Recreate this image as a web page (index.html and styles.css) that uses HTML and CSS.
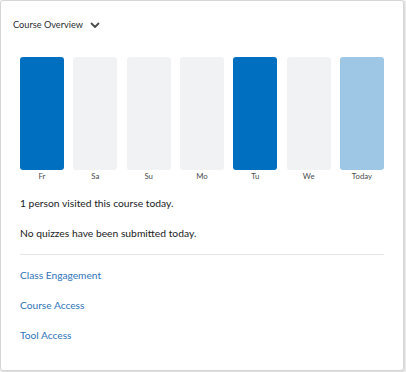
FILE: index.html
```html
<!DOCTYPE html>
<html lang="en">
<head>
  <meta charset="UTF-8">
  <title>Course Overview</title>
  <link rel="stylesheet" href="styles.css">
</head>
<body>
  <div class="card">
    <!-- Header -->
    <div class="card-header">
      <h2>Course Overview</h2>
      <svg class="chevron" width="10" height="7" viewBox="0 0 10 7">
        <path d="M1.5 1.5 L5 5 L8.5 1.5" fill="none" stroke="#494c4e" stroke-width="1.8" stroke-linecap="round" stroke-linejoin="round"/>
      </svg>
    </div>

    <!-- Weekly visits -->
    <div class="chart">
      <div class="day"><div class="bar bar-visit"></div><span>Fr</span></div>
      <div class="day"><div class="bar"></div><span>Sa</span></div>
      <div class="day"><div class="bar"></div><span>Su</span></div>
      <div class="day"><div class="bar"></div><span>Mo</span></div>
      <div class="day"><div class="bar bar-visit"></div><span>Tu</span></div>
      <div class="day"><div class="bar"></div><span>We</span></div>
      <div class="day"><div class="bar bar-today"></div><span>Today</span></div>
    </div>

    <div class="summary">
      <p>1 person visited this course today.</p>
      <p>No quizzes have been submitted today.</p>
    </div>

    <div class="links">
      <a href="#">Class Engagement</a>
      <a href="#">Course Access</a>
      <a href="#">Tool Access</a>
    </div>
  </div>
</body>
</html>
```

FILE: styles.css
```css
* {
  margin: 0;
  padding: 0;
  box-sizing: border-box;
}

body {
  font-family: Lato, 'Open Sans', sans-serif;
  background: #f3f3f3;
  width: 406px;
  height: 372px;
}

.card {
  width: 404px;
  height: 371px;
  background: white;
  border: 1px solid #d6d6d6;
  border-radius: 3px;
  box-shadow: 1px 1px 2px rgba(0,0,0,0.12);
  padding: 17px 19px 0 19px;
}

.card-header {
  display: flex;
  align-items: center;
  gap: 7px;
  margin-left: -7px;
  height: 14px;
}

.card-header h2 {
  font-size: 9.2px;
  font-weight: 400;
  line-height: 14px;
  color: #2a2c2e;
}

.chevron {
  display: block;
  margin-top: 1px;
}

.chart {
  display: grid;
  grid-template-columns: repeat(7, 1fr);
  gap: 9.3px;
  margin-top: 25px;
}

.day {
  display: flex;
  flex-direction: column;
  align-items: center;
}

.bar {
  width: 100%;
  height: 113px;
  background: #f1f2f4;
  border-radius: 3px;
}

.bar-visit {
  background: #006fbf;
}

.bar-today {
  background: #9ec7e6;
}

.day span {
  font-size: 7.8px;
  line-height: 12px;
  color: #494c4e;
}

.summary {
  margin-top: 13px;
  display: flex;
  flex-direction: column;
  gap: 14px;
  padding-bottom: 13px;
  border-bottom: 1px solid #e3e6e9;
}

.summary p {
  font-size: 10.3px;
  line-height: 16px;
  color: #202122;
}

.links {
  display: flex;
  flex-direction: column;
  gap: 14px;
  margin-top: 12px;
}

.links a {
  font-size: 10.2px;
  line-height: 16px;
  color: #2f74b8;
  text-decoration: none;
}
```
